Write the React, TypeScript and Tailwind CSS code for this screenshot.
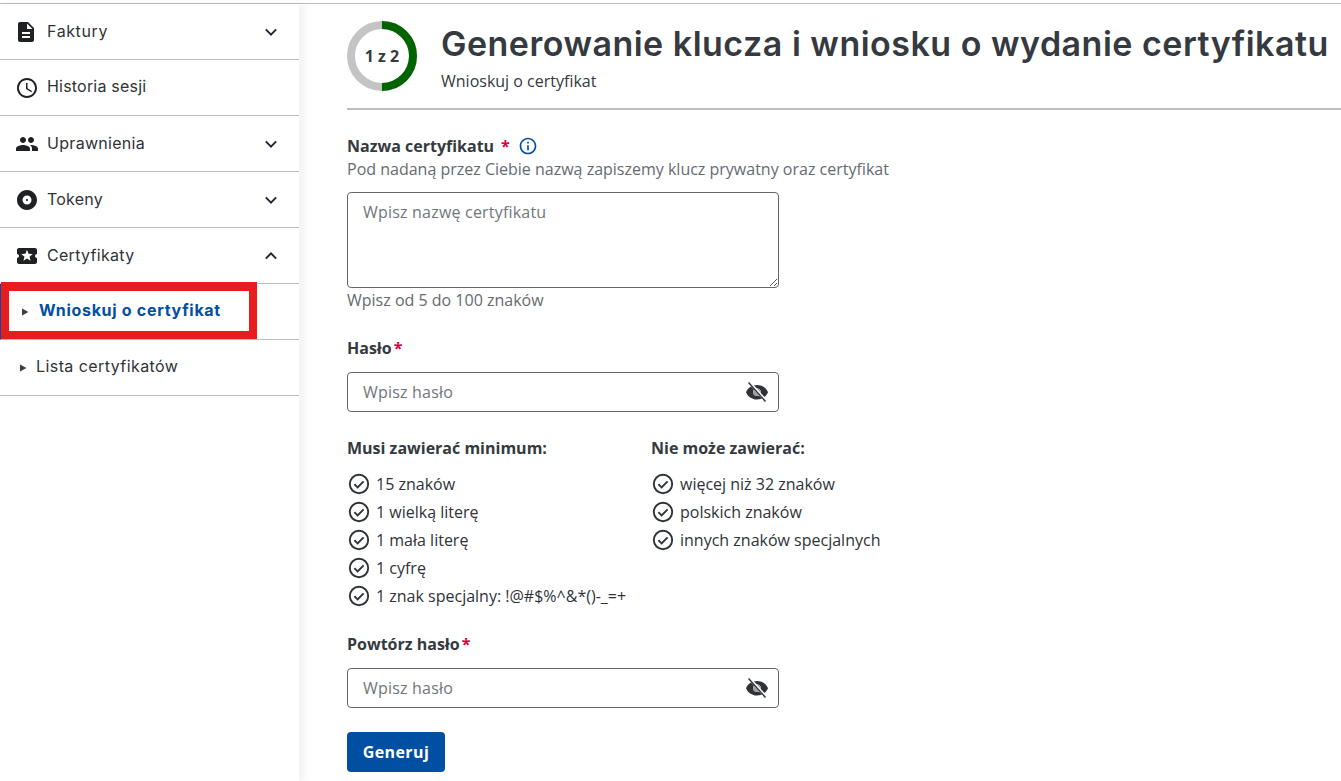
import React from "react";
import {
  MdDescription,
  MdOutlineAccessTime,
  MdPeople,
  MdAlbum,
  MdLocalActivity,
  MdInfoOutline,
} from "react-icons/md";

const SANS = "font-['Open_Sans',sans-serif]";
const MONT = "font-['Inter','Noto_Sans',sans-serif]";

function EyeOff() {
  return (
    <svg width="24" height="24" viewBox="0 0 24 24" className="shrink-0">
      <path
        fill="#2f3338"
        fillRule="evenodd"
        d="M12 5C7 5 2.7 8 1 12.2c1.7 4.2 6 7.3 11 7.3s9.3-3.1 11-7.3C21.3 8 17 5 12 5zm0 11a3.8 3.8 0 1 1 0-7.6 3.8 3.8 0 0 1 0 7.6z"
      />
      <circle cx="12" cy="12.2" r="3.8" fill="#9a9da0" />
      <path d="M4.5 2.5 21.5 21.5" stroke="#fff" strokeWidth="3" />
      <path d="M3.5 2.5 20.5 21.5" stroke="#2f3338" strokeWidth="1.4" />
    </svg>
  );
}

function Tri() {
  return (
    <svg width="7" height="8" viewBox="0 0 7 8" className="shrink-0">
      <path d="M0 0.5 6.5 4 0 7.5z" fill="#3a3f45" />
    </svg>
  );
}

function Chevron({ up }: { up?: boolean }) {
  return (
    <svg width="22" height="22" viewBox="0 0 22 22" className="shrink-0">
      <path
        d={up ? "M5.8 13.6 11 8.4l5.2 5.2" : "M5.8 8.4 11 13.6l5.2-5.2"}
        fill="none"
        stroke="#1f2933"
        strokeWidth="2"
      />
    </svg>
  );
}

function CheckCircle() {
  return (
    <svg width="24" height="24" viewBox="0 0 24 24" className="shrink-0">
      <circle cx="12" cy="12" r="9.2" fill="none" stroke="#2f3338" strokeWidth="1.9" />
      <path d="M7.4 12.2l3.2 3.2 6-6" fill="none" stroke="#2f3338" strokeWidth="1.9" />
    </svg>
  );
}

function NavRow({
  icon,
  label,
  chevron,
  tracking,
}: {
  icon: React.ReactNode;
  label: string;
  chevron?: "down" | "up";
  tracking: string;
}) {
  return (
    <div className="flex h-14 items-center border-b border-[#bdbdbd] pl-[15px] pr-[17px]">
      <div className="flex w-[32px] shrink-0 items-center">{icon}</div>
      <span className={`${MONT} ${tracking} flex-1 text-[16px] text-[#2f3338]`}>{label}</span>
      {chevron === "down" && <Chevron />}
      {chevron === "up" && <Chevron up />}
    </div>
  );
}

function Check({ text }: { text: string }) {
  return (
    <li className="flex h-7 items-center gap-[5px] text-[16px] text-[#2f3338]">
      <CheckCircle />
      <span>{text}</span>
    </li>
  );
}

function PasswordField() {
  return (
    <div className="flex h-10 w-[432px] items-center justify-between rounded-[4px] border border-[#666] pl-[15px] pr-[9px]">
      <span className="-mt-[1px] text-[16px] tracking-[0.2px] text-[#71767c]">Wpisz hasło</span>
      <EyeOff />
    </div>
  );
}

export default function App() {
  return (
    <div className={`${SANS} h-[781px] w-full overflow-hidden bg-white pt-[3px]`}>
      <div className="flex h-[778px] border-t border-[#bdbdbd]">
        <aside className="relative w-[299px] shrink-0 shadow-[6px_0_8px_rgba(0,0,0,0.05)]">
          <NavRow tracking="tracking-[0.6px] -mt-[2px]" icon={<MdDescription size={24} className="-ml-[1px] text-[#1f2124]" />} label="Faktury" chevron="down" />
          <NavRow tracking="tracking-[0.2px] -mt-[3px]" icon={<MdOutlineAccessTime size={24} className="text-[#1f2124]" />} label="Historia sesji" />
          <NavRow tracking="tracking-[0.3px] -mt-[2px]" icon={<MdPeople size={24} className="text-[#1f2124]" />} label="Uprawnienia" chevron="down" />
          <NavRow tracking="tracking-[0.2px] -mt-[2px]" icon={<MdAlbum size={24} className="text-[#1f2124]" />} label="Tokeny" chevron="down" />
          <NavRow tracking="tracking-[0.3px] -mt-[2px]" icon={<MdLocalActivity size={24} className="text-[#1f2124]" />} label="Certyfikaty" chevron="up" />

          <div className="flex h-14 items-center border-b border-l border-[#bdbdbd] border-l-[#004fa3] pl-[21px]">
            <Tri />
            <span className={`${MONT} -mt-[3px] ml-[10px] text-[16px] font-bold tracking-[0.7px] text-[#004fa3]`}>Wnioskuj o certyfikat</span>
          </div>
          <div className="flex h-14 items-center border-b border-[#bdbdbd] pl-[20px]">
            <Tri />
            <span className={`${MONT} -mt-[3px] ml-[9px] text-[16px] tracking-[0.42px] text-[#2f3338]`}>Lista certyfikatów</span>
          </div>

          <div className="absolute left-[1px] top-[278px] h-[57px] w-[256px] border-[8px] border-t-[9px] border-[#e81c1c]" />
        </aside>

        <main className="min-w-0 flex-1 pl-[48px]">
          <header className="flex h-[106px] items-start border-b-2 border-[#bdbdbd] pt-[17px]">
            <div className="relative flex h-[70px] w-[70px] shrink-0 items-center justify-center">
              <svg width="70" height="70" viewBox="0 0 70 70" className="absolute inset-0">
                <circle cx="35" cy="35" r="31" fill="none" stroke="#c4c4c4" strokeWidth="8" />
                <path d="M35 4a31 31 0 0 1 0 62" fill="none" stroke="#006400" strokeWidth="8" />
              </svg>
              <span className="relative text-[16px] font-bold text-[#343a40]">1 z 2</span>
            </div>
            <div className="ml-[24px] min-w-0">
              <h1 className={`${MONT} mt-[3px] whitespace-nowrap text-[34px] font-semibold leading-[40px] tracking-[0.5px] text-[#343a40]`}>
                Generowanie klucza i wniosku o wydanie certyfikatu
              </h1>
              <p className="mt-[6px] text-[16px] leading-[22px] text-[#343a40]">Wnioskuj o certyfikat</p>
            </div>
          </header>

          <section className="mt-[24px]">
            <div className="flex h-[24px] items-center text-[16px] font-bold text-[#343a40]">
              <span>Nazwa certyfikatu</span>
              <span className="ml-[7px] text-[#d9003c]">*</span>
              <MdInfoOutline size={20} className="ml-[8px] text-[#004fa3]" />
            </div>
            <p className="text-[16px] leading-[22px] text-[#666b70]">
              Pod nadaną przez Ciebie nazwą zapiszemy klucz prywatny oraz certyfikat
            </p>
            <div className="relative mt-[12px] h-[96px] w-[432px] rounded-[4px] border border-[#666] px-[15px] pt-[7px]">
              <span className="text-[16px] tracking-[0.2px] text-[#71767c]">Wpisz nazwę certyfikatu</span>
              <svg width="8" height="8" viewBox="0 0 8 8" className="absolute bottom-[1px] right-[1px]">
                <path d="M1 8 8 1M5 8l3-3" stroke="#555" strokeWidth="1" />
              </svg>
            </div>
            <p className="mt-[1px] text-[16px] leading-[22px] text-[#666b70]">Wpisz od 5 do 100 znaków</p>
          </section>

          <section className="mt-[25px]">
            <div className="mb-[12px] h-[24px] text-[16px] font-bold leading-[24px] text-[#343a40]">
              Hasło<span className="ml-[2px] text-[#d9003c]">*</span>
            </div>
            <PasswordField />
          </section>

          <section className="mt-[24px] flex">
            <div className="w-[304px]">
              <div className="mb-[10px] h-[24px] text-[16px] font-bold leading-[24px] text-[#343a40]">Musi zawierać minimum:</div>
              <ul>
                <Check text="15 znaków" />
                <Check text="1 wielką literę" />
                <Check text="1 mała literę" />
                <Check text="1 cyfrę" />
                <Check text="1 znak specjalny: !@#$%^&*()-_=+" />
              </ul>
            </div>
            <div>
              <div className="mb-[10px] h-[24px] text-[16px] font-bold leading-[24px] text-[#343a40]">Nie może zawierać:</div>
              <ul>
                <Check text="więcej niż 32 znaków" />
                <Check text="polskich znaków" />
                <Check text="innych znaków specjalnych" />
              </ul>
            </div>
          </section>

          <section className="mt-[22px]">
            <div className="mb-[12px] h-[24px] text-[16px] font-bold leading-[24px] text-[#343a40]">
              Powtórz hasło<span className="ml-[2px] text-[#d9003c]">*</span>
            </div>
            <PasswordField />
          </section>

          <button className="mt-[24px] flex h-10 w-[98px] items-center justify-center rounded-[4px] bg-[#004fa3] pb-[1px] text-[16px] font-bold tracking-[0.4px] text-white">
            Generuj
          </button>
        </main>
      </div>
    </div>
  );
}
